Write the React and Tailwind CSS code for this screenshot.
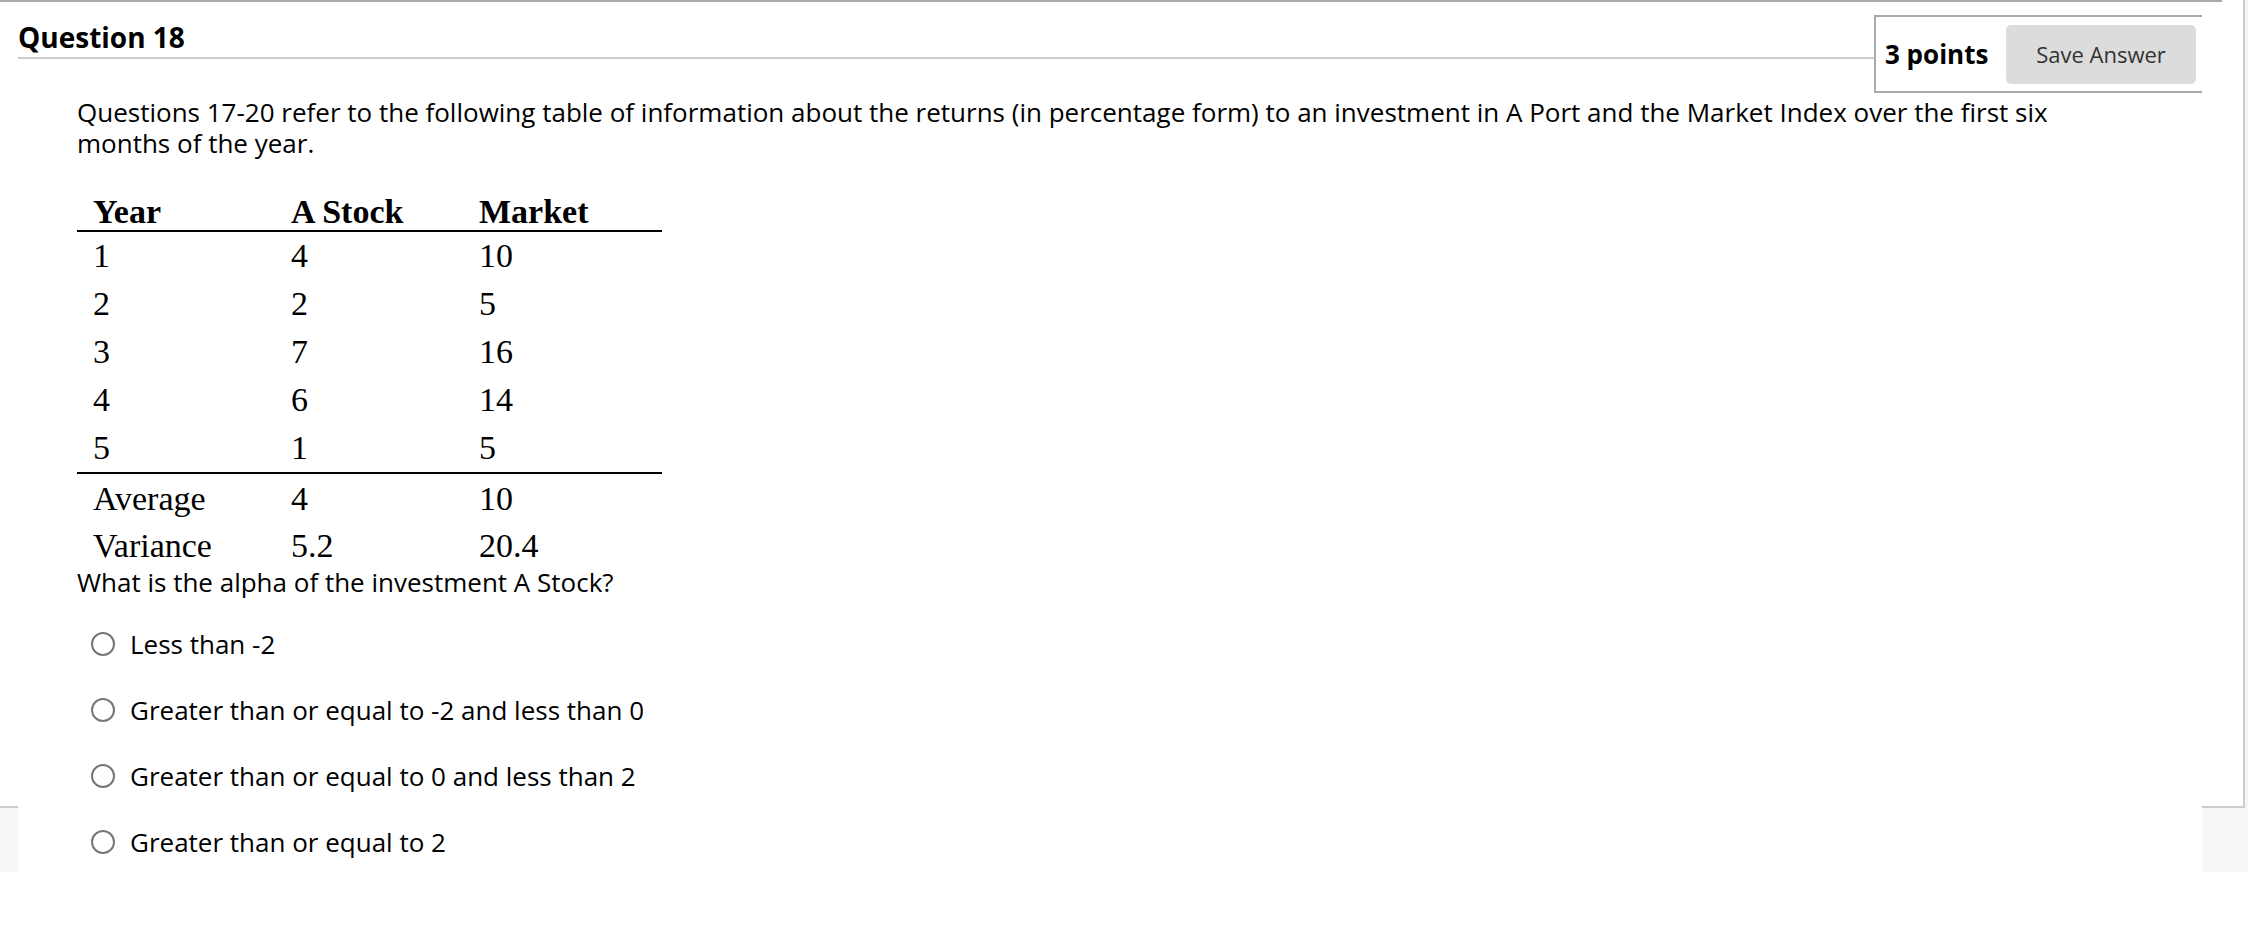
import React from 'react';

const rows = [
  ['1', '4', '10'],
  ['2', '2', '5'],
  ['3', '7', '16'],
  ['4', '6', '14'],
  ['5', '1', '5'],
];

const answers = [
  'Less than -2',
  'Greater than or equal to -2 and less than 0',
  'Greater than or equal to 0 and less than 2',
  'Greater than or equal to 2',
];

function Cells({ cells, bold }) {
  return (
    <>
      <div className={`w-[198px] pl-[16px] ${bold ? 'font-bold' : ''}`}>{cells[0]}</div>
      <div className={`w-[188px] pl-[16px] ${bold ? 'font-bold' : ''}`}>{cells[1]}</div>
      <div className={`w-[199px] pl-[16px] ${bold ? 'font-bold' : ''}`}>{cells[2]}</div>
    </>
  );
}

function ReturnsTable() {
  return (
    <div className="mt-[29px] w-[585px] font-['Liberation_Serif','Times_New_Roman',serif] text-[34px] text-black">
      <div className="flex h-[42px] leading-[48px] border-b-2 border-black box-content">
        <Cells cells={['Year', 'A Stock', 'Market']} bold />
      </div>
      {rows.map((r, i) => (
        <div
          key={r[0]}
          className={`flex h-[48px] leading-[48px] ${i === rows.length - 1 ? 'border-b-2 border-black box-content' : ''}`}
        >
          <Cells cells={r} />
        </div>
      ))}
      <div className="flex h-[48px] leading-[50px]">
        <Cells cells={['Average', '4', '10']} />
      </div>
      <div className="flex h-[45px] leading-[48px]">
        <Cells cells={['Variance', '5.2', '20.4']} />
      </div>
    </div>
  );
}

function Answer({ label }) {
  return (
    <label className="flex h-[66px] items-center">
      <span className="ml-[14px] h-[24px] w-[24px] shrink-0 rounded-full border-2 border-[#767676] bg-white" />
      <span className="ml-[15px]">{label}</span>
    </label>
  );
}

export default function App() {
  return (
    <div className="h-[942px] w-full overflow-hidden bg-white font-['Open_Sans',sans-serif] text-black">
      {/* top rule */}
      <div className="flex h-[2px]">
        <div className="w-[2222px] bg-[#aaaaaa]" />
        <div className="flex-1 bg-white" />
        <div className="w-[2px] bg-[#cccccc]" />
        <div className="w-[3px] bg-[#f5f5f5]" />
      </div>

      <div className="flex">
        {/* left gutter */}
        <div className="flex w-[18px] shrink-0 flex-col">
          <div className="h-[804px] bg-white" />
          <div className="h-[2px] bg-[#cccccc]" />
          <div className="h-[64px] bg-[#f7f7f7]" />
        </div>

        {/* question */}
        <div className="min-w-0 flex-1">
          <div className="flex items-start">
            <div className="flex-1 border-b-2 border-[#cccccc] pt-[17px] pb-[2px]">
              <h2 className="text-[28px] font-bold leading-[36px]">Question 18</h2>
            </div>
            <div className="-mr-[3px] mt-[13px] flex h-[78px] w-[331px] items-center justify-between border-2 border-[#aaaaaa] pl-[9px] pr-[7px]">
              <span className="text-[26px] font-bold leading-[32px]">3 points</span>
              <button className="h-[59px] w-[190px] rounded-[5px] bg-[#dcdcdc] text-[22px] text-[#333333]">
                Save Answer
              </button>
            </div>
          </div>

          <div className="pl-[59px] pr-[100px] text-[26px]">
            <p className="mt-[4px] leading-[31px]">
              Questions 17-20 refer to the following table of information about the returns (in percentage
              form) to an investment in A Port and the Market Index over the first six months of the year.
            </p>

            <ReturnsTable />

            <p className="leading-[31px]">What is the alpha of the investment A Stock?</p>

            <div className="mt-[13px] flex flex-col">
              {answers.map((a) => (
                <Answer key={a} label={a} />
              ))}
            </div>
          </div>
        </div>

        {/* right gutter */}
        <div className="flex w-[46px] shrink-0 flex-col">
          <div className="flex h-[804px]">
            <div className="w-[41px] bg-white" />
            <div className="w-[2px] bg-[#cccccc]" />
            <div className="w-[3px] bg-[#f5f5f5]" />
          </div>
          <div className="flex h-[2px]">
            <div className="w-[43px] bg-[#cccccc]" />
            <div className="w-[3px] bg-[#f5f5f5]" />
          </div>
          <div className="h-[64px] bg-[#f7f7f7]" />
        </div>
      </div>
    </div>
  );
}
